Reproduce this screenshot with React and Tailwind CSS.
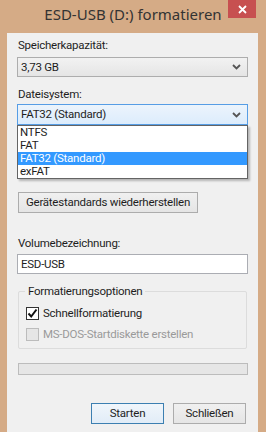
import React from "react";

const font = { fontFamily: 'Roboto, "Noto Sans", sans-serif' };
const titleFont = { fontFamily: '"Noto Sans", sans-serif' };

function Chevron() {
  return (
    <svg width="9" height="6" viewBox="0 0 9 6" className="shrink-0">
      <polyline points="1,1 4.5,4.5 8,1" fill="none" stroke="#555" strokeWidth="1.8" />
    </svg>
  );
}

function Check() {
  return (
    <svg width="11" height="11" viewBox="0 0 11 11">
      <polyline points="1.5,5.5 4.2,8.5 9.5,1.5" fill="none" stroke="#111" strokeWidth="2" />
    </svg>
  );
}

export default function App() {
  return (
    <div
      className="w-[266px] h-[432px] bg-[#d5ab86] flex flex-col overflow-hidden text-[11.5px] leading-[15px] text-[#1e1e1e]"
      style={font}
    >
      <div className="relative h-[33px] shrink-0 flex items-start justify-center pt-[4px]" style={titleFont}>
        <span className="text-[15px] leading-[20px] text-[#333]">ESD-USB (D:) formatieren</span>
        <div className="absolute right-[10px] top-0 w-[28px] h-[18px] bg-[#c75050] flex items-center justify-center">
          <svg width="9" height="9" viewBox="0 0 9 9">
            <path d="M1 1 L8 8 M8 1 L1 8" stroke="#fff" strokeWidth="1.8" />
          </svg>
        </div>
      </div>

      <div className="flex-1 ml-[7px] mr-[8px] bg-[#f0f0f0] px-[10px] pt-[5px] flex flex-col tracking-[-0.25px]">
        <div className="pl-[1px]">Speicherkapazität:</div>
        <div className="mt-[4px] h-[20px] border border-[#adadad] bg-gradient-to-b from-[#f2f2f2] to-[#e5e5e5] flex items-center justify-between pl-[3px] pr-[6px]">
          <span>3,73 GB</span>
          <Chevron />
        </div>

        <div className="mt-[10px] pl-[1px]">Dateisystem:</div>
        <div className="relative mt-[2px]">
          <div className="h-[21px] border border-[#569de5] bg-gradient-to-b from-[#ecf4fc] to-[#dcecfc] flex items-center justify-between pl-[3px] pr-[6px]">
            <span>FAT32 (Standard)</span>
            <Chevron />
          </div>
          <div className="absolute left-0 right-0 top-[21px] z-10 bg-white border border-[#646464] shadow-[2px_2px_2px_rgba(0,0,0,0.25)] flex flex-col">
            <div className="h-[13px] leading-[13px] px-[2px] overflow-hidden">NTFS</div>
            <div className="h-[13px] leading-[13px] px-[2px] overflow-hidden">FAT</div>
            <div className="h-[13px] leading-[13px] px-[2px] overflow-hidden bg-[#3399ff] text-white">FAT32 (Standard)</div>
            <div className="h-[13px] leading-[13px] px-[2px] overflow-hidden">exFAT</div>
          </div>
        </div>

        <div className="h-[67px] shrink-0" />

        <div className="flex">
          <div className="ml-[1px] h-[21px] border border-[#acacac] bg-gradient-to-b from-[#f0f0f0] to-[#e5e5e5] flex items-center px-[7px]">
            Gerätestandards wiederherstellen
          </div>
        </div>

        <div className="mt-[23px] pl-[1px]">Volumebezeichnung:</div>
        <div className="mt-[3px] h-[20px] border border-[#abadb3] bg-white flex items-center pl-[3px]">
          ESD-USB
        </div>

        <div className="relative mt-[17px] ml-[1px] mr-[1px] h-[58px] border border-[#dcdcdc] rounded-[2px] flex flex-col pl-[7px] pt-[10px]">
          <div className="absolute -top-[8px] left-[6px] px-[3px] bg-[#f0f0f0]">Formatierungsoptionen</div>
          <div className="flex items-center gap-[4px] mt-[4px]">
            <div className="w-[13px] h-[13px] border border-[#333] bg-white flex items-center justify-center">
              <Check />
            </div>
            <span>Schnellformatierung</span>
          </div>
          <div className="flex items-center gap-[4px] mt-[6px]">
            <div className="w-[13px] h-[13px] border border-[#bcbcbc] bg-[#e6e6e6]" />
            <span className="text-[#9a9a9a]">MS-DOS-Startdiskette erstellen</span>
          </div>
        </div>

        <div className="mt-[14px] ml-[1px] h-[12px] border border-[#bcbcbc] bg-[#e6e6e6]" />

        <div className="mt-[28px] flex justify-end gap-[9px] pr-[2px]">
          <div className="w-[73px] h-[21px] border border-[#3c7fb1] bg-gradient-to-b from-[#f0f6fb] to-[#e1ecf7] flex items-center justify-center">
            Starten
          </div>
          <div className="w-[73px] h-[21px] border border-[#acacac] bg-gradient-to-b from-[#f0f0f0] to-[#e5e5e5] flex items-center justify-center">
            Schließen
          </div>
        </div>
      </div>
    </div>
  );
}
